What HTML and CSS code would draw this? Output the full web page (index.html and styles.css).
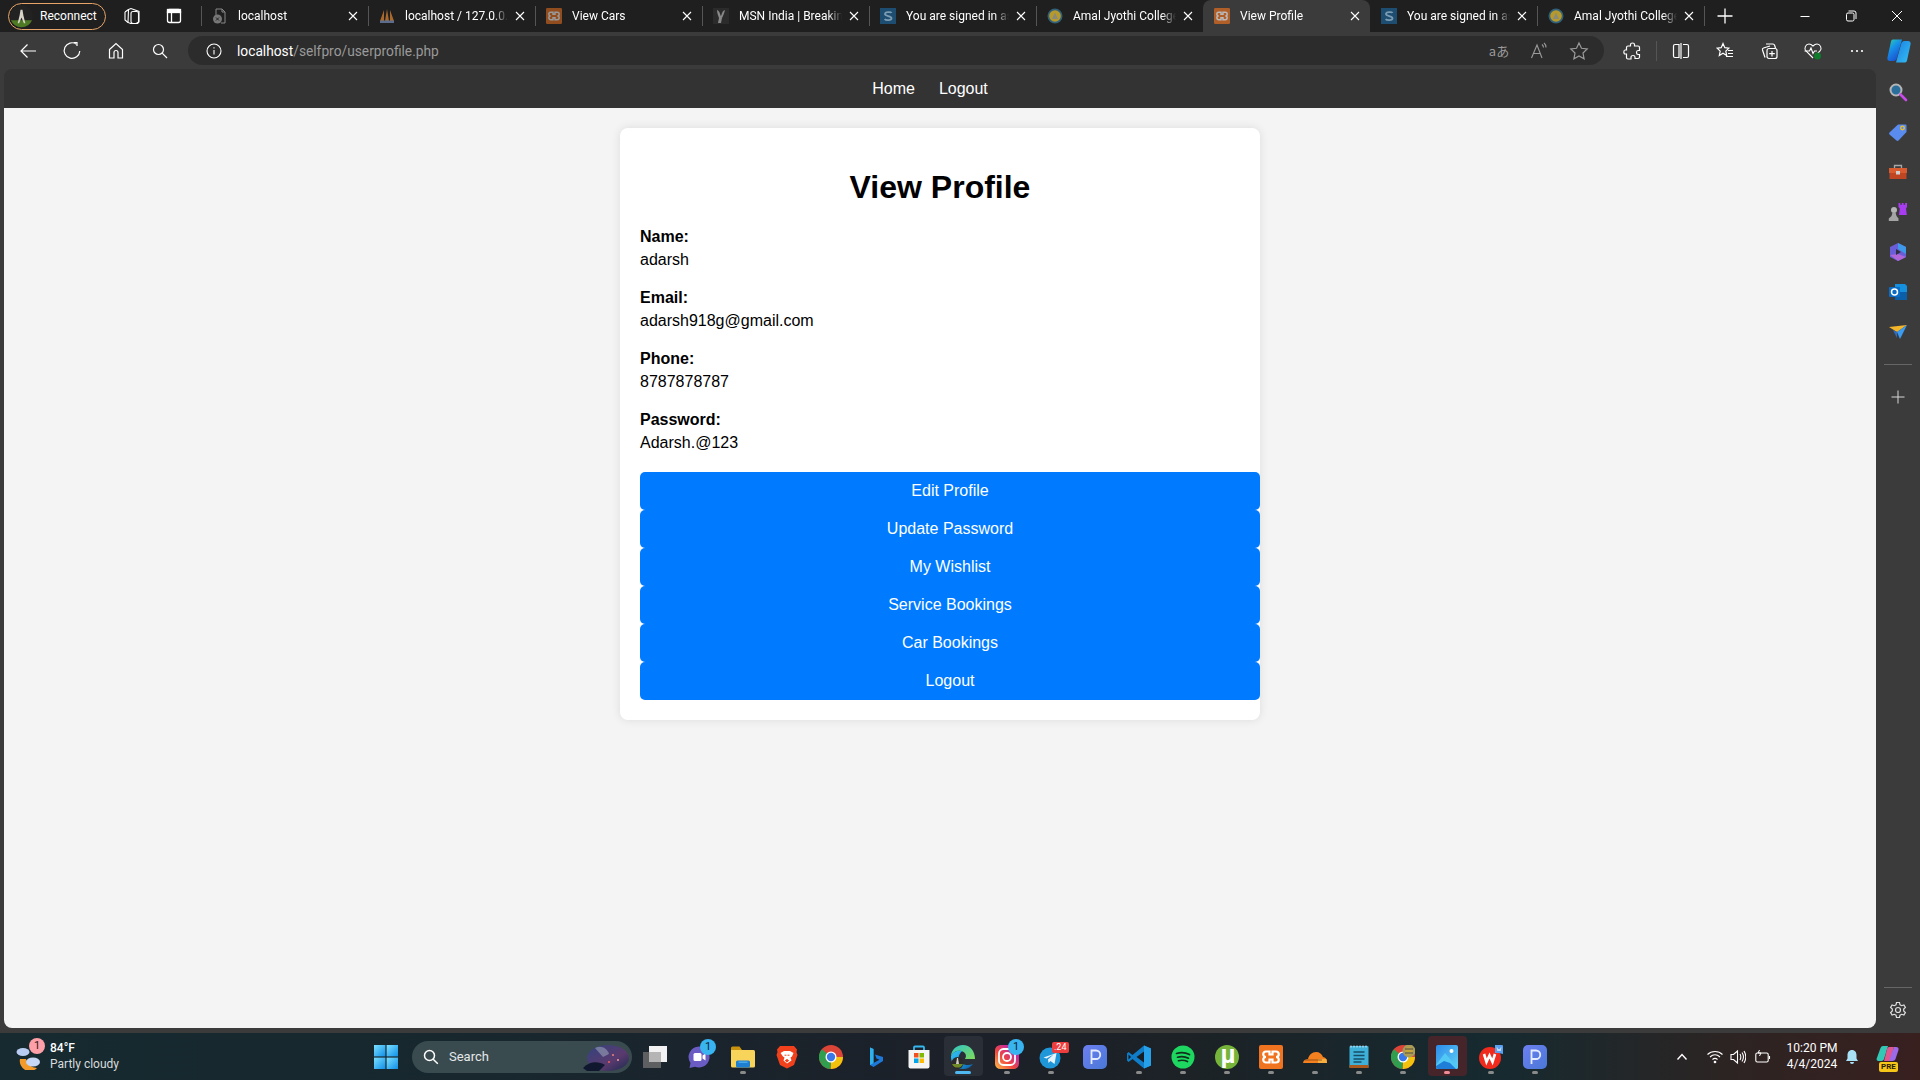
FILE: index.html
```html
<!DOCTYPE html>
<html lang="en">
<head>
<meta charset="utf-8">
<title>View Profile</title>
<link rel="stylesheet" href="styles.css">
</head>
<body>
<svg class="defs" width="0" height="0" aria-hidden="true">
  <defs>
    <linearGradient id="g-edge" x1="0" y1="0" x2="1" y2="1"><stop offset="0" stop-color="#35c1f1"/><stop offset=".5" stop-color="#1b9de2"/><stop offset="1" stop-color="#0c59a4"/></linearGradient>
    <linearGradient id="g-edge2" x1="0" y1="0" x2="1" y2="1"><stop offset="0" stop-color="#2fc3c9"/><stop offset="1" stop-color="#7fdc5a"/></linearGradient>
    <linearGradient id="g-ig" x1="0" y1="1" x2="1" y2="0"><stop offset="0" stop-color="#fdc04a"/><stop offset=".4" stop-color="#f0483e"/><stop offset=".75" stop-color="#c32aa3"/><stop offset="1" stop-color="#5a55d8"/></linearGradient>
    <linearGradient id="g-win" x1="0" y1="0" x2="1" y2="1"><stop offset="0" stop-color="#7be0ff"/><stop offset="1" stop-color="#0f8fe8"/></linearGradient>
    <linearGradient id="g-cop" x1="0" y1="0" x2=".6" y2="1"><stop offset="0" stop-color="#30d5a8"/><stop offset=".45" stop-color="#1690e8"/><stop offset="1" stop-color="#1b4fd0"/></linearGradient>
    <linearGradient id="g-cop2" x1="0" y1="0" x2="1" y2="1"><stop offset="0" stop-color="#1b7fe0"/><stop offset="1" stop-color="#35c0f5"/></linearGradient>
    <linearGradient id="g-p" x1="0" y1="0" x2="1" y2="1"><stop offset="0" stop-color="#6c7ff0"/><stop offset="1" stop-color="#4a78d8"/></linearGradient>
    <linearGradient id="g-ph" x1="0" y1="0" x2="1" y2="1"><stop offset="0" stop-color="#2c8bea"/><stop offset="1" stop-color="#61d2f5"/></linearGradient>
    <linearGradient id="g-art" x1="0" y1="0" x2="1" y2="1"><stop offset="0" stop-color="#31447e"/><stop offset=".6" stop-color="#5a3a6e"/><stop offset="1" stop-color="#1a2a50"/></linearGradient>
    <symbol id="xampp" viewBox="0 0 24 24"><rect width="24" height="24" rx="2" fill="#f0731f"/><path d="M7 6.500h3.500v3h3v-3H17a2 2 0 0 1 0 5.500 2 2 0 0 1 0 5.500h-3.500v-3h-3v3H7a2 2 0 0 1 0-5.500 2 2 0 0 1 0-5.500z" fill="none" stroke="#fff" stroke-width="2.200"/></symbol>
    <symbol id="chrome" viewBox="0 0 24 24"><circle cx="12" cy="12" r="12" fill="#db4437"/><path d="M12 12 1.600 18A12 12 0 0 1 3 4.200z" fill="#2f9e4f"/><path d="M12 12h12a12 12 0 0 1-12.500 12z" fill="#f4c20d"/><path d="M12 12 1.600 18a12 12 0 0 0 9.900 6z" fill="#2f9e4f"/><circle cx="12" cy="12" r="5.500" fill="#fff"/><circle cx="12" cy="12" r="4.200" fill="#3b78e7"/></symbol>
    <symbol id="pblue" viewBox="0 0 24 24"><rect width="24" height="24" rx="5" fill="url(#g-p)"/><path d="M8.500 19V5.500h4.500a4.200 4.200 0 0 1 0 8.500H8.500" fill="none" stroke="#e6ecff" stroke-width="1.800"/></symbol>
    <symbol id="amal" viewBox="0 0 16 16"><circle cx="8" cy="8" r="7.500" fill="#31607a"/><circle cx="8" cy="8" r="5.800" fill="#b79a2c"/><path d="M8 4.500 11 11H5z" fill="#8a8a7a"/></symbol>
    <symbol id="sfav" viewBox="0 0 16 16"><rect width="16" height="16" fill="#1d4d70"/><path d="M11.500 5C11 3.800 5 3.500 5 6c0 2.500 6.500 1.500 6.500 4.200 0 2.500-6 2.200-6.800.8" fill="none" stroke="#7c9cb2" stroke-width="1.800"/></symbol>
    <symbol id="tabx" viewBox="0 0 10 10"><path d="m1 1 8 8M9 1 1 9" stroke="#fff" stroke-width="1.100"/></symbol>
  </defs>
</svg>

<header class="tabstrip">
  <div class="reconnect">
    <svg class="avatar" viewBox="0 0 24 24"><circle cx="12" cy="12" r="12" fill="#222"/><path d="M1 16h22a12 12 0 0 1-22 0z" fill="#4f7a24"/><path d="M11 5h2l1 6 2 8h-1.500L12 13l-2.500 6H8l2-8z" fill="#d8d4c8"/></svg>
    <span>Reconnect</span>
  </div>
  <div class="strip-btn">
    <svg class="ic20" viewBox="0 0 20 20" fill="none" stroke="#fff" stroke-width="1.100"><path d="M6.500 3.500 9 2.500 17 5.500v10.500l-3 1.500H8.500L6 16.500z"/><rect x="9" y="5.500" width="7.500" height="12" rx="2"/><path d="M3 6 6.500 3.500M3 6v8l3 2.500"/></svg>
  </div>
  <div class="strip-btn">
    <svg class="ic20" viewBox="0 0 20 20" fill="none" stroke="#fff" stroke-width="1.300"><rect x="3.500" y="3.500" width="13" height="13" rx="2"/><rect x="3.500" y="3.500" width="13" height="3" fill="#fff"/><path d="M7.500 6.500v10"/></svg>
  </div>
  <nav class="tabs">
    <div class="tab">
      <svg class="fav" viewBox="0 0 16 16" fill="none" stroke="#888" stroke-width="1"><path d="M4 7V1h6l3 3v11H9"/><path d="M10 1v3h3"/><circle cx="5.500" cy="11" r="4.500" fill="#777" stroke="none"/><path d="M4 9.500l3 3m0-3-3 3" stroke="#222"/></svg>
      <span class="tab-title">localhost</span><svg class="tab-x"><use href="#tabx"/></svg>
    </div>
    <div class="tab">
      <svg class="fav" viewBox="0 0 16 16"><path d="M1 13 5 2v11zM6 13l2-12 2 12zM11 13V2l4 11z" fill="#a9692c"/><rect x="1" y="12.500" width="14" height="2.500" fill="#5c6c8c"/></svg>
      <span class="tab-title">localhost / 127.0.0.1</span><svg class="tab-x"><use href="#tabx"/></svg>
    </div>
    <div class="tab">
      <svg class="fav dim" viewBox="0 0 24 24"><use href="#xampp"/></svg>
      <span class="tab-title">View Cars</span><svg class="tab-x"><use href="#tabx"/></svg>
    </div>
    <div class="tab">
      <svg class="fav" viewBox="0 0 16 16"><rect width="16" height="16" fill="#2b2b2b"/><path d="M4 2c3 1 3 5 4 6 1-2 1-5 4-6-1 4-2 6-3 8l-1 5H5l1-5C5 7 4 5 4 2z" fill="#888"/></svg>
      <span class="tab-title">MSN India | Breaking News</span><svg class="tab-x"><use href="#tabx"/></svg>
    </div>
    <div class="tab">
      <svg class="fav" viewBox="0 0 16 16"><use href="#sfav"/></svg>
      <span class="tab-title">You are signed in as</span><svg class="tab-x"><use href="#tabx"/></svg>
    </div>
    <div class="tab">
      <svg class="fav" viewBox="0 0 16 16"><use href="#amal"/></svg>
      <span class="tab-title">Amal Jyothi College of</span><svg class="tab-x"><use href="#tabx"/></svg>
    </div>
    <div class="tab tab-active">
      <svg class="fav dim-soft" viewBox="0 0 24 24"><use href="#xampp"/></svg>
      <span class="tab-title">View Profile</span><svg class="tab-x"><use href="#tabx"/></svg>
    </div>
    <div class="tab tab-after">
      <svg class="fav" viewBox="0 0 16 16"><use href="#sfav"/></svg>
      <span class="tab-title">You are signed in as</span><svg class="tab-x"><use href="#tabx"/></svg>
    </div>
    <div class="tab">
      <svg class="fav" viewBox="0 0 16 16"><use href="#amal"/></svg>
      <span class="tab-title">Amal Jyothi College of</span><svg class="tab-x"><use href="#tabx"/></svg>
    </div>
  </nav>
  <div class="new-tab">
    <svg class="ic20" viewBox="0 0 20 20" stroke="#fff" stroke-width="1.300"><path d="M10 2.500v15M2.500 10h15"/></svg>
  </div>
  <div class="win-controls">
    <div class="win-btn"><svg class="ic12" viewBox="0 0 12 12" stroke="#fff"><path d="M1.500 6.500h9"/></svg></div>
    <div class="win-btn"><svg class="ic12" viewBox="0 0 12 12" fill="none" stroke="#fff"><rect x="1.500" y="3" width="7.500" height="8" rx="1.500"/><path d="M3.500 1h5.500a2 2 0 0 1 2 2v6"/></svg></div>
    <div class="win-btn"><svg class="ic12" viewBox="0 0 12 12" stroke="#fff"><path d="m1 1 10 10M11 1 1 11"/></svg></div>
  </div>
</header>

<div class="toolbar">
  <div class="tool"><svg class="ic20" viewBox="0 0 20 20" fill="none" stroke="#fff" stroke-width="1.200"><path d="M18 10H3M9.500 3.500 3 10l6.500 6.500"/></svg></div>
  <div class="tool"><svg class="ic20" viewBox="0 0 20 20" fill="none" stroke="#fff" stroke-width="1.200"><path d="M14.500 3.200A7.800 7.800 0 1 0 17.800 10"/><path d="M11.500 1.500h3.500V5"/></svg></div>
  <div class="tool"><svg class="ic20" viewBox="0 0 20 20" fill="none" stroke="#fff" stroke-width="1.200"><path d="M3.500 8.500 10 2.500l6.500 6V17h-4.500v-5.500a2 2 0 0 0-4 0V17H3.500z"/></svg></div>
  <div class="tool"><svg class="ic16" viewBox="0 0 16 16" fill="none" stroke="#fff" stroke-width="1.200"><circle cx="6.500" cy="6.500" r="5"/><path d="m10.200 10.200 4.800 4.800"/></svg></div>
  <div class="address">
    <svg class="ic16 addr-info" viewBox="0 0 16 16" fill="none" stroke="#fff" stroke-width="1.100"><circle cx="8" cy="8" r="7"/><path d="M8 7v4.500M8 4.200v1.300"/></svg>
    <span class="url"><span class="url-host">localhost</span>/selfpro/userprofile.php</span>
    <div class="addr-tools">
      <div class="addr-tool"><span class="aa">aあ</span></div>
      <div class="addr-tool"><svg class="ic20" viewBox="0 0 20 20" fill="none" stroke="#9a9a9a" stroke-width="1.100"><path d="M2.500 17 8 4l5 13M4.500 12.500h7"/><path d="M13 3.500c1 .8 1.500 1.800 1.500 3M15 2c1.500 1.200 2 2.700 2 4.500"/></svg></div>
      <div class="addr-tool"><svg class="ic20" viewBox="0 0 20 20" fill="none" stroke="#9a9a9a" stroke-width="1.200"><path d="m10 2 2.500 5.300 5.700.7-4.200 4 1.100 5.800L10 15l-5.100 2.800L6 12 1.800 8l5.700-.7z"/></svg></div>
    </div>
  </div>
  <div class="tool tool-first"><svg class="ic20" viewBox="0 0 20 20" fill="none" stroke="#fff" stroke-width="1.200"><path d="M7.500 3.500c0-2 4-2 4 0V5h3.500c1 0 1.500.5 1.500 1.500v3h-1.500c-2 0-2 4 0 4h1.500v2.500c0 1-.5 1.500-1.500 1.500h-3v-1.500c0-2-4-2-4 0V18H5c-1 0-1.500-.5-1.500-1.500V13H2c-1.500 0-1.500-4 0-4h1.500V6.500C3.500 5.500 4 5 5 5h2.500z"/></svg></div>
  <span class="tool-sep"></span>
  <div class="tool"><svg class="ic20" viewBox="0 0 20 20" fill="none" stroke="#fff" stroke-width="1.200"><path d="M8 3.500H4A1.500 1.500 0 0 0 2.500 5v10A1.500 1.500 0 0 0 4 16.500h4zM12 3.500h4A1.500 1.500 0 0 1 17.500 5v10a1.500 1.500 0 0 1-1.500 1.500h-4M10 2v16"/></svg></div>
  <div class="tool"><svg class="ic20" viewBox="0 0 20 20" fill="none" stroke="#fff" stroke-width="1.200"><path d="m8 2.500 1.800 4.200 4 .4-3 3 .9 4.400L8 12.300l-3.700 2.200.9-4.400-3-3 4-.4zM13 9.500h5M13 12.500h5M11 15.500h7"/></svg></div>
  <div class="tool"><svg class="ic20" viewBox="0 0 20 20" fill="none" stroke="#fff" stroke-width="1.200"><path d="M6 16.500 3.500 9c-.3-1 0-1.700 1-2L11 5"/><path d="M7 3h7a2 2 0 0 1 1.500 1l1 3"/><rect x="8" y="7.500" width="10" height="10" rx="2"/><path d="M13 10v5.500M10.200 12.700h5.600"/></svg></div>
  <div class="tool"><svg class="ic20" viewBox="0 0 20 20" fill="none" stroke="#fff" stroke-width="1.100"><path d="M10 17 3 10C.5 7 3 3 6 3c2 0 3 1 4 2 1-1 2-2 4-2 3 0 5.500 4 3 7l-4 4"/><path d="M1.500 10h5l1.500-3 2 5.500 1.500-2.500h2.500"/><circle cx="14.500" cy="15" r="3.500" fill="#0f7b2d" stroke="none"/></svg></div>
  <div class="tool"><svg class="ic16" viewBox="0 0 16 16" fill="#fff"><circle cx="3" cy="8" r="1.100"/><circle cx="8" cy="8" r="1.100"/><circle cx="13" cy="8" r="1.100"/></svg></div>
  <div class="tool tool-copilot"><svg class="ic26" viewBox="0 0 26 26"><path d="M19 24.500h-9l5-18c.5-2 1.500-3.500 3.500-3.500H22c2 0 3 1.500 2.500 3.500L21 22.500c-.3 1.300-1 2-2 2z" fill="url(#g-cop2)"/><path d="M7 1.500h9l-5 18c-.5 2-1.500 3.500-3.500 3.500H4c-2 0-3-1.500-2.500-3.500L5 3.500c.3-1.300 1-2 2-2z" fill="url(#g-cop)"/></svg></div>
</div>

<div class="workspace">
  <div class="viewport">
    <nav class="site-nav">
      <a class="site-link" href="#">Home</a>
      <a class="site-link" href="#">Logout</a>
    </nav>
    <main class="page">
      <section class="card">
        <h2 class="card-title">View Profile</h2>
        <div class="field"><strong class="field-label">Name:</strong><span class="field-value">adarsh</span></div>
        <div class="field"><strong class="field-label">Email:</strong><span class="field-value">adarsh918g@gmail.com</span></div>
        <div class="field"><strong class="field-label">Phone:</strong><span class="field-value">8787878787</span></div>
        <div class="field"><strong class="field-label">Password:</strong><span class="field-value">Adarsh.@123</span></div>
        <a class="btn" href="#">Edit Profile</a>
        <a class="btn" href="#">Update Password</a>
        <a class="btn" href="#">My Wishlist</a>
        <a class="btn" href="#">Service Bookings</a>
        <a class="btn" href="#">Car Bookings</a>
        <a class="btn" href="#">Logout</a>
      </section>
    </main>
  </div>
  <aside class="sidebar">
    <div class="side"><svg class="ic20" viewBox="0 0 20 20"><circle cx="8" cy="8" r="5.500" fill="#2a6f9c" stroke="#b5b5b5" stroke-width="2"/><path d="m12.500 12.500 5.500 5.500" stroke="#c84be8" stroke-width="2.600" stroke-linecap="round"/></svg></div>
    <div class="side"><svg class="ic20" viewBox="0 0 20 20"><path d="M1.500 10.500 10 2.500h7.500a1 1 0 0 1 1 1V10L10.500 18.500a1.500 1.500 0 0 1-2 0L1.500 12.500a1.500 1.500 0 0 1 0-2z" fill="#5a8cf0"/><circle cx="14.500" cy="6" r="1.800" fill="none" stroke="#f0c020" stroke-width="1.300"/></svg></div>
    <div class="side"><svg class="ic20" viewBox="0 0 20 20"><path d="M6.500 6V3.500h7V6" fill="none" stroke="#a8a8a8" stroke-width="1.300"/><rect x="1" y="6" width="18" height="5" fill="#d85c30"/><rect x="1.500" y="11" width="17" height="6" fill="#c04522"/><rect x="8" y="9" width="4" height="3.500" fill="#d0d0d0"/></svg></div>
    <div class="side"><svg class="ic20" viewBox="0 0 20 20"><path d="M10.500 1h1.800v1.800h1.500V1h1.800v1.800h1.500V1H19v4l-1 1.500.8 6.500H11l.8-6.500-1.300-1.500z" fill="#a83cf0"/><circle cx="6" cy="8" r="3" fill="#b4b4b4"/><path d="M4.500 10.500h3L8.500 14l2 2.500V19H.8v-2.500L3.500 14z" fill="#a4a4a4"/></svg></div>
    <div class="side"><svg class="ic20" viewBox="0 0 20 20"><path d="M10 1 18 5v10l-8 4-8-4V5z" fill="#6a5ed8"/><path d="M10 1 18 5v7L10 7z" fill="#3e9ae8"/><path d="M2 13l8 6 8-4-8-3z" fill="#b067d8"/><path d="M8 7l5 3-5 3z" fill="#2f2f3f"/></svg></div>
    <div class="side"><svg class="ic20" viewBox="0 0 20 20"><path d="M7 2h10l2 2v13l-2 1H7z" fill="#1490df"/><path d="M12 10h7v8H7v-5z" fill="#0a5fa8"/><rect x="1" y="5" width="11" height="10" rx="1" fill="#0a6cc4"/><circle cx="6.500" cy="10" r="3" fill="none" stroke="#fff" stroke-width="1.500"/></svg></div>
    <div class="side"><svg class="ic20" viewBox="0 0 20 20"><path d="M1 5 19 3 9 10z" fill="#f3b52a"/><path d="M19 3 9 10l3 7z" fill="#3b9bf0"/><path d="M5 8l4 2 0 6z" fill="#2a6ec8"/></svg></div>
    <span class="side-line side-line-top"></span>
    <div class="side"><svg class="ic16" viewBox="0 0 16 16" stroke="#d8d8d8"><path d="M8 1.500v13M1.500 8h13"/></svg></div>
    <span class="side-line side-line-bottom"></span>
    <div class="side side-end"><svg class="ic20" viewBox="0 0 20 20" fill="none" stroke="#e0e0e0" stroke-width="1.200"><circle cx="10" cy="10" r="2.500"/><path d="M8.500 2.500h3l.5 2.300 1.700.9 2.200-.8 1.500 2.600-1.700 1.600v1.800l1.700 1.600-1.500 2.600-2.200-.8-1.700.9-.5 2.300h-3l-.5-2.300-1.700-.9-2.200.8-1.500-2.600 1.700-1.600V9.100L2.600 7.500l1.500-2.600 2.200.8 1.700-.9z"/></svg></div>
  </aside>
</div>

<footer class="taskbar">
  <div class="weather">
    <div class="weather-icon">
      <svg class="ic26" viewBox="0 0 26 26"><path d="M4 15a10 10 0 0 0 17 9 11 11 0 0 1-11-9z" fill="#f39a2b"/><ellipse cx="7" cy="8" rx="6.500" ry="4" fill="#b9cdf2"/><ellipse cx="17" cy="18" rx="7" ry="4.500" fill="#c6d7f5"/></svg>
      <span class="weather-badge">1</span>
    </div>
    <div class="weather-text"><span class="temp">84°F</span><span class="cond">Partly cloudy</span></div>
  </div>
  <div class="start"><svg class="ic24" viewBox="0 0 24 24"><rect width="11.400" height="11.400" fill="url(#g-win)"/><rect x="12.600" width="11.400" height="11.400" fill="url(#g-win)"/><rect y="12.600" width="11.400" height="11.400" fill="url(#g-win)"/><rect x="12.600" y="12.600" width="11.400" height="11.400" fill="url(#g-win)"/></svg></div>
  <div class="search">
    <svg class="ic16" viewBox="0 0 16 16" fill="none" stroke="#fff" stroke-width="1.500"><circle cx="6.500" cy="6.500" r="5"/><path d="m10.200 10.200 4.600 4.600"/></svg>
    <span class="search-text">Search</span>
    <svg class="search-art" viewBox="0 0 46 28"><ellipse cx="25" cy="15" rx="21" ry="13" fill="url(#g-art)"/><path d="M12 5c6-3 12 0 14 6l-6 3z" fill="#9aa0b8" opacity=".6"/><path d="M0 25c8-8 16-6 22-3l-6 6H4z" fill="#101830"/><circle cx="30" cy="12" r="1" fill="#f08080"/><circle cx="35" cy="17" r="1" fill="#f0a0a0"/><circle cx="26" cy="19" r="1" fill="#f06060"/></svg>
  </div>
  <div class="apps">
    <div class="app"><svg class="ic24" viewBox="0 0 24 24"><rect x="6" y="1" width="18" height="16" fill="#f2f2f2"/><rect y="7" width="18" height="16" fill="#6a6a6a" opacity=".85"/><rect x="6" y="7" width="12" height="10" fill="#b5b5b5"/></svg></div>
    <div class="app"><svg class="ic24" viewBox="0 0 24 24"><path d="M12 1.500a10.500 10.500 0 1 1-4 20.200L2.500 23l1-5A10.500 10.500 0 0 1 12 1.500z" fill="#6b5cc4"/><rect x="6.500" y="8" width="8" height="8" rx="1.500" fill="#fff"/><path d="m15.500 10.500 3-2v7l-3-2z" fill="#fff"/></svg><span class="badge-blue">1</span></div>
    <div class="app app-dot"><svg class="ic24" viewBox="0 0 24 24"><path d="M0 3a1.500 1.500 0 0 1 1.500-1.500h7L11 5H0z" fill="#c8920f"/><path d="M0 5h22.500A1.500 1.500 0 0 1 24 6.500V21a1.500 1.500 0 0 1-1.500 1.500h-21A1.500 1.500 0 0 1 0 21z" fill="#f9d45a"/><rect x="5" y="15.500" width="14" height="7" rx="1.500" fill="#1e7fd0"/><rect x="7.500" y="16.500" width="9" height="1.500" fill="#48a8e8"/></svg></div>
    <div class="app"><svg class="ic24" viewBox="0 0 24 24"><path d="M5 1h14l3 3.500-.5 2.500 1 3L19 20l-7 3.500L5 20 1.500 10l1-3L2 4.500z" fill="#f0401c"/><path d="M5.500 8 9 6h6l3.500 2-1.500 3.500-1.500 1 1 3L12 18.500l-3.500-3 1-3L8 11.500z" fill="#fff"/><path d="M9.500 10.200h2M12.500 10.200h2M10.300 15.500 12 14.500l1.700 1L12 17.200z" stroke="#f0401c" fill="#f0401c"/></svg></div>
    <div class="app"><svg class="ic24" viewBox="0 0 24 24"><use href="#chrome"/></svg></div>
    <div class="app"><svg class="ic24" viewBox="0 0 24 24"><path d="M7 2.500 10.500 4v14l6-3.200-3-1.300-1.500-4 8 2.500v4L10.500 22 7 20z" fill="#1d78d8"/><path d="M7 2.500 10.500 4v14L7 20z" fill="#30b0ea"/></svg></div>
    <div class="app"><svg class="ic24" viewBox="0 0 24 24"><path d="M7 5V2.500a1 1 0 0 1 1-1h8a1 1 0 0 1 1 1V5" fill="none" stroke="#35b7f0" stroke-width="1.800"/><path d="M1.500 5h21v16.500a2 2 0 0 1-2 2h-17a2 2 0 0 1-2-2z" fill="#f4f4f4"/><rect x="7" y="8" width="4.500" height="4.500" fill="#f25022"/><rect x="12.500" y="8" width="4.500" height="4.500" fill="#7fba00"/><rect x="7" y="13.500" width="4.500" height="4.500" fill="#00a4ef"/><rect x="12.500" y="13.500" width="4.500" height="4.500" fill="#ffb900"/></svg></div>
    <div class="app app-edge"><svg class="ic24" viewBox="0 0 24 24"><path d="M12 0C5 0 .5 5 0 11c2-4 6-6 10-5 5 1 6 5 4 8h10C24 6 19 0 12 0z" fill="url(#g-edge2)"/><path d="M0 11c-.5 7 5 13 12 13 4 0 8-2 10-5-5 2-12 1-14-4-1-3 0-6 3-9C6 5 2 7 0 11z" fill="url(#g-edge)"/><circle cx="6.500" cy="18" r="6" fill="#2a2a2a"/><path d="M1 19h11a6 6 0 0 1-11 0z" fill="#6d8a26"/><path d="M6 13h1l1 6H5z" fill="#d0cfc4"/></svg></div>
    <div class="app app-dot"><svg class="ic24" viewBox="0 0 24 24"><rect width="24" height="24" rx="5.500" fill="url(#g-ig)"/><rect x="4" y="4" width="16" height="16" rx="4.500" fill="none" stroke="#fff" stroke-width="1.800"/><circle cx="12" cy="12" r="4" fill="none" stroke="#fff" stroke-width="1.800"/></svg><span class="badge-blue">1</span></div>
    <div class="app app-dot"><svg class="ic24" viewBox="0 0 24 24"><circle cx="11" cy="13" r="10.500" fill="#1f96d8"/><path d="M4.500 12.500 17.500 8l-2 11-4-3-2 2-.5-3.500 5.500-5-7 4z" fill="#e8f4fb"/></svg><span class="badge-red">.24</span></div>
    <div class="app"><svg class="ic24" viewBox="0 0 24 24"><use href="#pblue"/></svg></div>
    <div class="app app-dot"><svg class="ic24" viewBox="0 0 24 24"><path d="M17 0.500 24 3.500v17L17 23.500 5.500 14 1.500 17 0 15.500V8.500L1.500 7 5.500 10z" fill="#0f7dc8"/><path d="M17 0.500 24 3.500v17L17 23.500z" fill="#27a0ea"/><path d="M17 6.500 9.500 12l7.500 5.500z" fill="#171d24"/><path d="M1.500 9.500 4 12l-2.500 2.500z" fill="#171d24"/></svg></div>
    <div class="app app-dot"><svg class="ic24" viewBox="0 0 24 24"><circle cx="12" cy="12" r="11.500" fill="#1ed760"/><path d="M5.500 8.500c4-1.300 9-1 13 1M6.500 12.200c3.500-1 7.500-.8 11 1M7.500 15.700c3-.8 6-.6 9 .8" fill="none" stroke="#10301c" stroke-width="1.700" stroke-linecap="round"/></svg></div>
    <div class="app app-dot"><svg class="ic24" viewBox="0 0 24 24"><circle cx="12" cy="12" r="12" fill="#76b43a"/><text class="mu" x="13" y="18" text-anchor="middle">µ</text></svg></div>
    <div class="app app-dot"><svg class="ic24" viewBox="0 0 24 24"><use href="#xampp"/></svg></div>
    <div class="app app-dot"><svg class="ic24" viewBox="0 0 24 24"><path d="M0 18c.5-3 2.500-4 5-4 1-4 4-7 8-7 3.500 0 6 2 7 5 2.500 0 4 2 4 6z" fill="#f48120"/><path d="M15 14h8.500l.5 4h-9z" fill="#faad3f"/><path d="M2 15h17" stroke="#6d3a10" stroke-width=".7"/></svg></div>
    <div class="app app-dot"><svg class="ic24" viewBox="0 0 24 24"><rect x="2.500" y="1" width="19" height="22" rx="1" fill="#3fb0d8"/><rect x="2.500" y="20" width="19" height="3" fill="#a85a1e"/><path d="M6.500 7h11M6.500 10.500h11M6.500 14h11M6.500 17h8" stroke="#154d66" stroke-width="1.500"/><path d="M4 .5v2M7 .5v2M10 .5v2M13 .5v2M16 .5v2M19 .5v2" stroke="#dff3fb"/></svg></div>
    <div class="app app-dot"><svg class="ic24" viewBox="0 0 24 24"><use href="#chrome"/><circle cx="18" cy="6" r="6.500" fill="#a89a58"/><circle cx="18" cy="6" r="3.800" fill="#c9a536"/><path d="M14 4h8M14 8h8" stroke="#404a58"/></svg></div>
    <div class="app app-photos"><svg class="ic24" viewBox="0 0 24 24"><rect width="22" height="24" x="1" rx="2" fill="url(#g-ph)"/><circle cx="16.500" cy="6" r="2" fill="#fff"/><path d="M1 20 10 8l6 7 7 6v1a2 2 0 0 1-2 2H3a2 2 0 0 1-2-2z" fill="#52c8f5"/><path d="M1 22v-1l8-5 6 2 6 6H3a2 2 0 0 1-2-2z" fill="#1f7fd8"/></svg></div>
    <div class="app app-dot"><svg class="ic24" viewBox="0 0 24 24"><circle cx="11" cy="13" r="11" fill="#f02a1c"/><path d="M5 9l2.500 8 3-6.500 3 6.500L16 9" fill="none" stroke="#fff" stroke-width="2.600"/><path d="M16 0h7a1 1 0 0 1 1 1v8l-4-1h-4z" fill="#5aa0f0"/><path d="M18 2.500 19 6l1-2 1 2 1-3.500" fill="none" stroke="#fff" stroke-width=".7"/></svg></div>
    <div class="app app-dot"><svg class="ic24" viewBox="0 0 24 24"><use href="#pblue"/></svg></div>
  </div>
  <div class="tray">
    <div class="tray-chevron"><svg class="ic12" viewBox="0 0 12 12" fill="none" stroke="#fff" stroke-width="1.400"><path d="m1.500 8.500 4.500-5 4.500 5"/></svg></div>
    <div class="tray-wifi"><svg class="ic16" viewBox="0 0 16 16" fill="none" stroke="#fff" stroke-width="1.100"><path d="M.5 5.500c4-4 11-4 15 0M3 8c3-2.800 7-2.800 10 0M5.500 10.500c1.500-1.300 3.500-1.300 5 0"/><circle cx="8" cy="13" r=".8" fill="#fff"/></svg></div>
    <div class="tray-vol"><svg class="ic16" viewBox="0 0 16 16" fill="none" stroke="#fff" stroke-width="1.100"><path d="M1 5.500h2.500L7.500 2v12l-4-3.500H1z"/><path d="M10 5c1 1.800 1 4.200 0 6M12 3.500c1.800 2.800 1.800 6.200 0 9M14 2c2.300 3.800 2.300 8.200 0 12"/></svg></div>
    <div class="tray-bat"><svg class="ic16" viewBox="0 0 16 16" fill="none" stroke="#fff" stroke-width="1.100"><rect x=".8" y="4" width="12.400" height="9" rx="1.500"/><path d="M14.500 7v3"/><path d="M4.500 1 3 4h3L4.500 7" stroke-width="1"/></svg></div>
    <div class="clock"><span>10:20 PM</span><span>4/4/2024</span></div>
    <div class="tray-bell"><svg class="ic16" viewBox="0 0 16 16" fill="#a8e0f5"><path d="M8 1c3 0 4.500 2.500 4.500 5v3.500L14 12H2l1.500-2.500V6C3.500 3.500 5 1 8 1z"/><path d="M6 13h4a2 2 0 0 1-4 0z"/></svg></div>
    <div class="tray-copilot">
      <svg class="ic24" viewBox="0 0 24 24"><path d="M7 1h5L8 14c-.5 1.500-1.500 2-3 2H2.500C1 16 .3 15 .7 13.500L4.500 3C5 1.700 5.800 1 7 1z" fill="#33c7b5"/><path d="M13 2h5l-3 12c-.5 1.500-1.500 2-3 2H8l3-12c.4-1.300 1-2 2-2z" fill="#e0568f"/><path d="M18 2h2c2 0 3 1.300 2.500 3L19.500 14c-.4 1.300-1.500 2-3 2H13z" fill="#9a6ae8"/></svg>
      <span class="pre">PRE</span>
    </div>
  </div>
</footer>
</body>
</html>
```
FILE: styles.css
```css
* { box-sizing: border-box; }
html, body { margin: 0; height: 100%; }
body {
  width: 1920px;
  height: 1080px;
  overflow: hidden;
  display: flex;
  flex-direction: column;
  background: #3b3b3b;
  font-family: Roboto, "Liberation Sans", sans-serif;
  font-size: 12px;
  color: #fff;
}
.defs { position: absolute; }
svg { display: block; flex: none; }
.ic12 { width: 12px; height: 12px; }
.ic16 { width: 16px; height: 16px; }
.ic20 { width: 20px; height: 20px; }
.ic24 { width: 24px; height: 24px; }
.ic26 { width: 26px; height: 26px; }

/* Tab strip */
.tabstrip { height: 32px; flex: none; display: flex; align-items: center; background: #1f1f1f; padding-left: 8px; }
.reconnect { width: 98px; height: 27px; border: 1px solid #e7a468; border-radius: 14px; display: flex; align-items: center; gap: 7px; padding-left: 1px; font-size: 12px; }
.avatar { width: 23px; height: 23px; }
.strip-btn { width: 42px; height: 32px; display: flex; align-items: center; justify-content: center; margin-left: 5px; }
.strip-btn + .strip-btn { margin-left: 0; }
.tabs { display: flex; height: 32px; margin-left: 6px; }
.tab { position: relative; width: 167px; height: 32px; display: flex; align-items: center; padding-left: 11px; }
.tab::before { content: ""; position: absolute; left: 0; top: 6px; height: 20px; width: 1px; background: #555; }
.tab-active::before, .tab-after::before { display: none; }
.tab-active { background: #3b3b3b; border-radius: 8px 8px 0 0; }
.fav { width: 16px; height: 16px; }
.dim { opacity: .55; }
.dim-soft { opacity: .65; }
.tab-title { width: 103px; margin-left: 10px; white-space: nowrap; overflow: hidden; font-size: 12px; -webkit-mask-image: linear-gradient(90deg, #000 86%, transparent 100%); mask-image: linear-gradient(90deg, #000 86%, transparent 100%); }
.tab-x { width: 10px; height: 10px; margin-left: 7px; }
.new-tab { width: 44px; height: 32px; padding-right: 2px; display: flex; align-items: center; justify-content: center; position: relative; }
.new-tab::before { content: ""; position: absolute; left: 0; top: 6px; height: 20px; width: 1px; background: #555; }
.win-controls { margin-left: auto; display: flex; }
.win-btn { width: 46px; height: 32px; display: flex; align-items: center; justify-content: center; }

/* Toolbar */
.toolbar { height: 37px; flex: none; display: flex; align-items: flex-start; padding: 4px 0 0 6px; background: #3b3b3b; }
.tool { width: 44px; height: 29px; display: flex; align-items: center; justify-content: center; }
.tool-first { margin-left: 7px; }
.tool-sep { width: 1px; height: 20px; margin: 5px 2px 0 1px; background: #555; }
.tool-copilot { width: 40px; }
.address { width: 1416px; height: 29px; margin-left: 6px; display: flex; align-items: center; background: #2c2c2c; border-radius: 15px; padding-left: 18px; }
.url { margin-left: 15px; font-size: 13.75px; color: #9a9a9a; }
.url-host { color: #fff; }
.addr-tools { margin-left: auto; display: flex; padding-right: 5px; }
.addr-tool { width: 40px; height: 29px; display: flex; align-items: center; justify-content: center; color: #9a9a9a; }
.aa { font-family: "Noto Sans CJK JP", sans-serif; font-size: 13px; }

/* Workspace */
.workspace { flex: 1; display: flex; min-height: 0; }
.viewport { width: 1872px; margin: 0 0 5px 4px; display: flex; flex-direction: column; border-radius: 8px; overflow: hidden; font-family: "Liberation Sans", Arial, sans-serif; font-size: 16px; }
.site-nav { height: 39px; flex: none; display: flex; align-items: center; justify-content: center; gap: 24px; padding-right: 20px; background: #333; }
.site-link { color: #fff; text-decoration: none; }
.page { flex: 1; background: #f4f4f4; padding-top: 20px; color: #000; }
.card { width: 640px; margin: 0 auto; padding: 20px; background: #fff; border-radius: 8px; box-shadow: 0 0 10px rgba(0, 0, 0, .1); }
.card-title { margin: 21px 0 22px; text-align: center; font-size: 32px; line-height: 37px; font-weight: bold; }
.field { margin-bottom: 20px; }
.field-label { display: block; margin-bottom: 5px; line-height: 18px; }
.field-value { display: block; line-height: 18px; }
.btn { display: block; width: 620px; height: 38px; padding: 10px; text-align: center; line-height: 18px; color: #fff; background: #007bff; border-radius: 5px; text-decoration: none; }

/* Sidebar */
.sidebar { width: 44px; flex: none; display: flex; flex-direction: column; align-items: center; padding: 3px 0 3px; }
.side { width: 44px; height: 40px; display: flex; align-items: center; justify-content: center; }
.side-line { width: 28px; height: 1px; background: #666; }
.side-line-top { margin-top: 12px; margin-bottom: 12px; }
.side-line-bottom { margin-top: auto; margin-bottom: 2px; }

/* Taskbar */
.taskbar { height: 47px; flex: none; display: flex; align-items: center; background: linear-gradient(90deg, #162a30 0%, #18272e 25%, #1c2029 50%, #1c2226 62%, #162a30 78%, #2c2423 90%, #38201f 100%); }
.weather { width: 364px; display: flex; align-items: center; padding-left: 16px; gap: 8px; }
.weather-icon { position: relative; width: 26px; height: 26px; }
.weather-badge { position: absolute; left: 13px; top: -6px; width: 16px; height: 16px; border-radius: 50%; background: #ffa0a8; color: #2a1a1a; text-align: center; font-size: 11px; line-height: 16px; }
.weather-text { display: flex; flex-direction: column; line-height: 16px; padding-bottom: 2px; }
.temp { font-weight: 500; }
.cond { color: #d8dcdc; }
.start { width: 44px; height: 47px; display: flex; align-items: center; justify-content: center; }
.search { width: 220px; height: 32px; margin: 0 1px 0 4px; padding-left: 11px; display: flex; align-items: center; gap: 10px; border-radius: 16px; background: #3a4b4f; }
.search-text { font-size: 13px; color: #e4e8e8; padding-bottom: 1px; }
.search-art { width: 46px; height: 28px; margin-left: auto; margin-right: 3px; }
.apps { display: flex; }
.app { position: relative; width: 44px; height: 47px; display: flex; align-items: center; justify-content: center; }
.app-dot::after, .app-edge::after, .app-photos::after { content: ""; position: absolute; left: 19px; bottom: 6px; width: 6px; height: 3px; border-radius: 2px; background: #8a8a8a; }
.app-edge::before, .app-photos::before { content: ""; position: absolute; left: 3px; top: 3px; width: 39px; height: 40px; border-radius: 4px; background: #2a2e36; }
.app-photos::before { background: #46252a; }
.app-edge svg, .app-photos svg { position: relative; }
.app-edge::after { left: 14px; width: 16px; background: #4fb8f0; }
.app-photos::after { background: #f08a94; }
.badge-blue { position: absolute; left: 23px; top: 6px; width: 16px; height: 16px; border-radius: 50%; background: #38b4f0; color: #10222c; text-align: center; font-size: 11px; line-height: 16px; }
.badge-red { position: absolute; left: 23px; top: 9px; padding: 0 2px; height: 11px; border-radius: 2px; background: #ee3e3e; color: #fff; font-size: 9px; line-height: 11px; }
.mu { font-family: "Liberation Sans", sans-serif; font-size: 26px; font-weight: bold; fill: #fff; }
.tray { margin-left: 103px; display: flex; align-items: center; height: 47px; }
.tray-chevron { width: 44px; display: flex; justify-content: center; }
.tray-wifi { width: 22px; display: flex; justify-content: center; }
.tray-vol { width: 24px; display: flex; justify-content: center; }
.tray-bat { width: 26px; display: flex; justify-content: center; }
.clock { width: 60px; margin-left: 6px; padding-bottom: 2px; display: flex; flex-direction: column; align-items: center; line-height: 16px; white-space: nowrap; }
.tray-bell { width: 20px; display: flex; justify-content: center; }
.tray-copilot { position: relative; width: 52px; display: flex; justify-content: center; }
.pre { position: absolute; left: 17px; bottom: -3px; padding: 0 2px; height: 10px; border-radius: 2px; background: #f5c518; color: #2a2000; font-size: 8px; font-weight: bold; line-height: 10px; }
```
